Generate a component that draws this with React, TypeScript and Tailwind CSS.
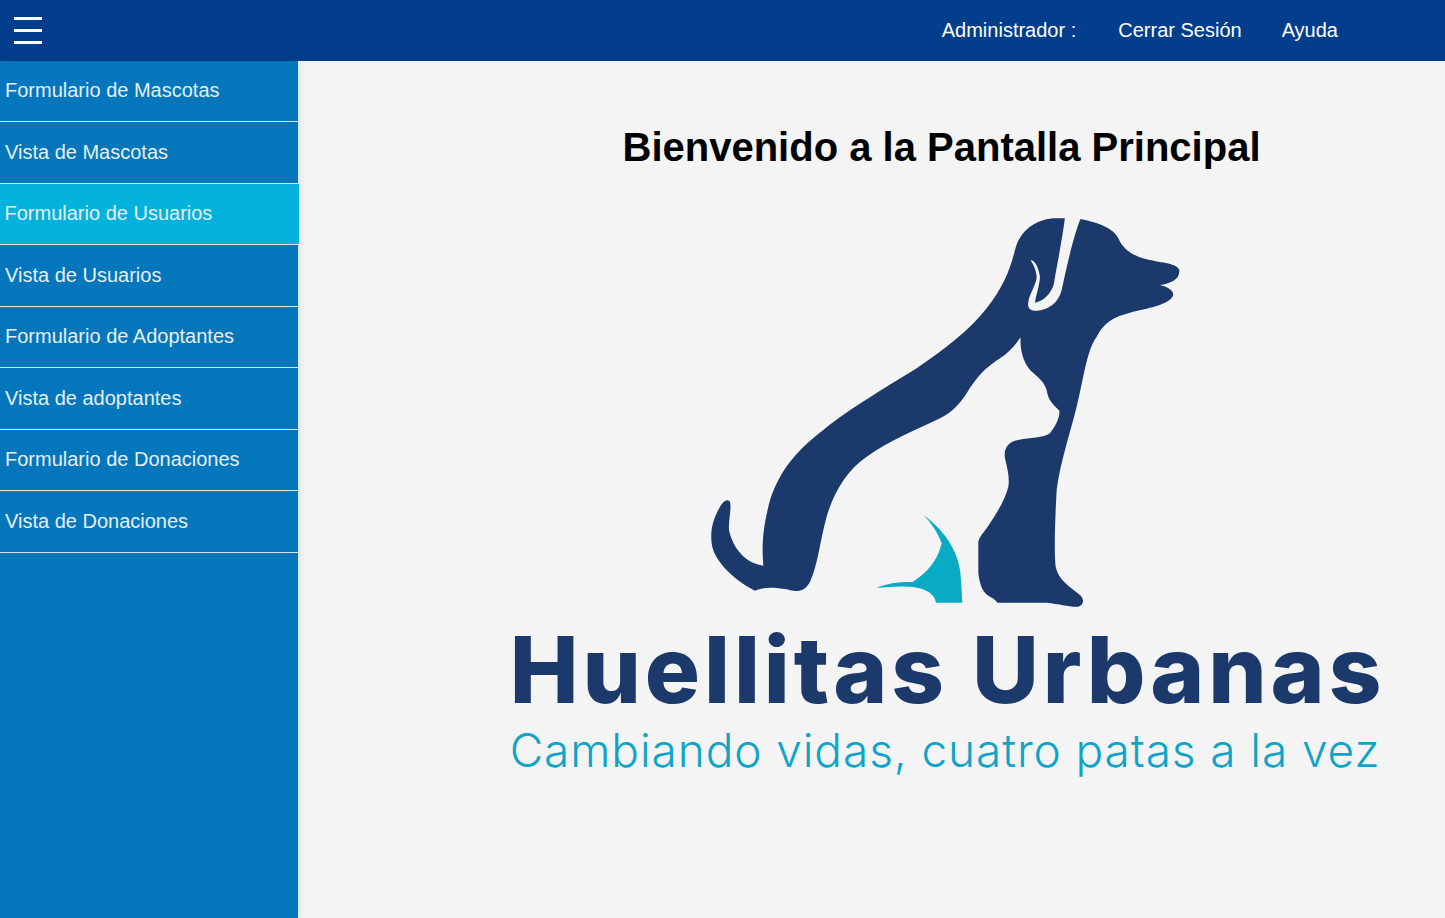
import React from 'react';

const menuItems = [
  { label: 'Formulario de Mascotas', height: 'h-[61px] pb-[3px]' },
  { label: 'Vista de Mascotas', height: 'h-[61.5px] pb-px' },
  { label: 'Formulario de Usuarios', height: 'h-[61.5px] pb-px', active: true },
  { label: 'Vista de Usuarios', height: 'h-[61.5px] pb-px' },
  { label: 'Formulario de Adoptantes', height: 'h-[61.5px] pb-px' },
  { label: 'Vista de adoptantes', height: 'h-[61.5px] pb-px' },
  { label: 'Formulario de Donaciones', height: 'h-[61.5px] pb-px' },
  { label: 'Vista de Donaciones', height: 'h-[61.5px] pb-px' },
];

const DogLogo = () => (
  <svg viewBox="0 0 1530 1260" className="w-[510px] h-[420px] block">
    <path
      fill="#1b3a6b"
      d="M1100 55 C1040 55 990 90 975 150 C960 210 940 260 890 325 C840 390 760 450 680 505 C600 555 480 625 400 690 C320 750 260 820 235 920 C218 990 215 1040 220 1097 C170 1090 130 1050 117 990 C115 960 125 930 120 905 C110 895 100 905 90 920 C70 955 60 990 65 1030 C70 1080 130 1140 195 1172 C215 1162 250 1160 290 1168 C320 1178 345 1175 360 1145 C385 1090 390 1020 410 950 C430 880 470 810 530 770 C600 720 680 690 750 655 C790 635 810 610 830 580 C860 530 890 500 930 475 C955 460 975 435 992 412 C990 440 995 480 1020 510 C1040 530 1060 540 1070 570 C1075 600 1085 610 1108 632 C1110 655 1095 680 1080 700 C1060 715 1020 712 985 720 C955 725 940 745 945 775 C950 800 960 830 955 860 C945 900 920 940 890 985 C875 1005 865 1015 865 1030 L865 1120 C870 1160 880 1180 900 1190 C915 1197 920 1205 922 1208 L1070 1208 C1110 1212 1140 1222 1165 1220 C1180 1215 1185 1200 1170 1185 C1140 1160 1105 1140 1097 1100 C1092 1060 1095 960 1100 870 C1110 790 1140 700 1160 620 C1180 540 1190 450 1220 410 C1240 370 1270 350 1320 338 C1370 325 1440 315 1450 285 C1450 270 1430 260 1410 255 C1440 250 1470 240 1468 210 C1460 190 1420 190 1370 178 C1330 168 1305 150 1290 125 C1275 85 1230 70 1175 58 L1125 55 Z"
    />
    <path
      fill="#f4f4f4"
      d="M1125 50 L1172 55 C1150 110 1130 200 1115 270 C1105 310 1075 330 1040 332 C1020 332 1012 325 1015 305 C1020 280 1035 260 1040 235 C1040 210 1030 195 1022 180 C1035 182 1045 200 1050 230 C1048 260 1038 285 1035 308 C1060 305 1085 280 1092 250 C1100 200 1120 100 1125 50 Z"
    />
    <path
      fill="#08aac4"
      d="M700 945 C750 980 800 1040 810 1110 C815 1150 815 1185 817 1208 L738 1208 C735 1180 700 1160 650 1160 C620 1158 590 1162 560 1163 C590 1150 630 1145 668 1146 C710 1120 745 1080 755 1030 C740 990 720 965 700 945 Z"
    />
  </svg>
);

const App: React.FC = () => {
  return (
    <div className="flex flex-col h-[918px] overflow-hidden font-['Liberation_Sans',Arial,sans-serif] bg-[#f4f4f4]">
      {/* Header */}
      <header className="h-[61px] shrink-0 flex items-center justify-between pl-[14px] pr-[107px] pb-[2px] bg-[#033e8c] text-white text-[20px]">
        <button className="flex flex-col gap-[9px] w-[28px] mt-[2px]">
          <span className="block h-[3px] bg-white" />
          <span className="block h-[3px] bg-white" />
          <span className="block h-[3px] bg-white" />
        </button>
        <nav className="flex items-center">
          <span>Administrador :</span>
          <span className="ml-[42px]">Cerrar Sesión</span>
          <span className="ml-[40px]">Ayuda</span>
        </nav>
      </header>

      <div className="flex flex-1 min-h-0">
        {/* Sidebar */}
        <aside className="w-[298px] shrink-0 bg-[#0476bb] shadow-[0_0_8px_rgba(0,0,0,0.15)] z-10">
          {menuItems.map((item) => (
            <a
              key={item.label}
              className={`flex items-center ${item.height} text-[20px] text-[#e6eff5] border-b border-[#d5e6f0] ${item.active ? 'bg-[#03b2dc] -mr-px pl-[4.5px]' : 'pl-[5px]'}`}
            >
              {item.label}
            </a>
          ))}
        </aside>

        {/* Main */}
        <main className="flex-1 flex flex-col items-center pl-[140px] pt-[63px]">
          <h1 className="text-[40px] leading-[46px] font-bold text-black">Bienvenido a la Pantalla Principal</h1>
          <div className="mt-[30px] ml-[6px]">
            <DogLogo />
          </div>
          <div className="font-['Inter',sans-serif] font-extrabold text-[92px] leading-[84px] tracking-[3.9px] text-[#1b3a6b] whitespace-nowrap mt-[8px] ml-[12px]">
            Huellitas Urbanas
          </div>
          <div className="font-['Inter',sans-serif] font-light text-[46px] leading-[46px] tracking-[0.9px] text-[#0fa3c8] whitespace-nowrap mt-[15px] ml-[7px]">
            Cambiando vidas, cuatro patas a la vez
          </div>
        </main>
      </div>
    </div>
  );
};

export default App;
